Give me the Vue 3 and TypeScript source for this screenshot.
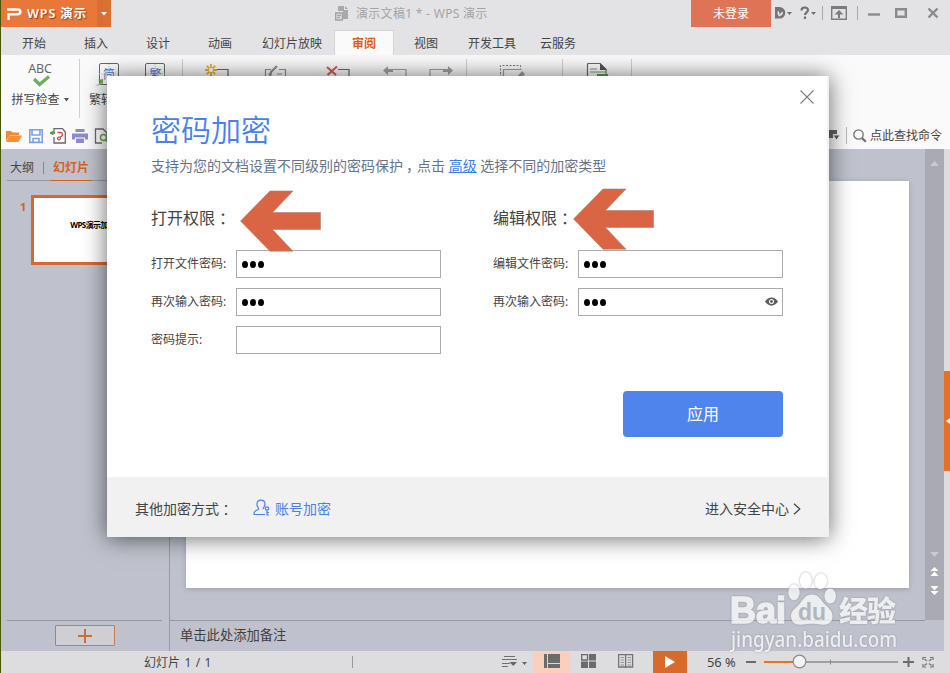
<script setup lang="ts">
import { ref } from 'vue'

interface Field {
  label: string
  dots: number
  eye?: boolean
}

interface Section {
  title: string
  fields: Field[]
}

const tabs: string[] = ['开始', '插入', '设计', '动画', '幻灯片放映', '审阅', '视图', '开发工具', '云服务']
const activeTab = ref<string>('审阅')

const sections: Section[] = [
  {
    title: '打开权限',
    fields: [
      { label: '打开文件密码:', dots: 3 },
      { label: '再次输入密码:', dots: 3 },
      { label: '密码提示:', dots: 0 },
    ],
  },
  {
    title: '编辑权限',
    fields: [
      { label: '编辑文件密码:', dots: 3 },
      { label: '再次输入密码:', dots: 3, eye: true },
    ],
  },
]
</script>

<template>
  <div class="window">
    <header class="titlebar">
      <div class="brand">
        <svg width="15" height="12" viewBox="0 0 15 12"><path d="M0 1.500h11a2.200 2.200 0 0 1 0 4.700H1.500V12" fill="none" stroke="#fff" stroke-width="2.400" /></svg>
        <span>WPS 演示</span>
      </div>
      <div class="brand-drop"><svg width="6" height="4" viewBox="0 0 6 4"><path d="M0 0h6L3 3.500z" fill="#fff" /></svg></div>
      <div class="doc-title">
        <svg width="15" height="15" viewBox="0 0 15 15">
          <path d="M3 0h6v4h4v9H8V5H3zM10 0l3 3h-3z" fill="#a9a9ab" />
          <path d="M.7 7h6.600v7H.7zM2 9.500h4M2 11.700h3" fill="#e3e3e5" stroke="#a0a0a2" stroke-width="1.300" />
        </svg>
        <span>演示文稿1 * - WPS 演示</span>
      </div>
      <div class="login">未登录</div>
      <div class="win-tools">
        <svg width="179" height="27" viewBox="0 0 179 27">
          <path d="M4 7h4.500a5.800 5.800 0 0 1 0 11.600H4z" fill="#747476" />
          <path d="M8 16.500c-2-2-1.600-4-1-6 1.500 1.500 1.800 3 1.500 5 .8-2 1.500-3.200 3.500-4 .2 2.500-1 4.500-4 5z" fill="#e3e3e5" />
          <path d="M16 12h5l-2.500 3zM40 12h5l-2.500 3z" fill="#707072" />
          <path d="M30.500 10.500c0-4 6.500-3.800 6.500-.5 0 2.300-3 2.500-3 5M34 16.500v2.500" fill="none" stroke="#707072" stroke-width="2.200" />
          <path d="M51.500 6v14M86.500 6v14" stroke="#aaaaac" />
          <path d="M60.700 6.700h14.600v12.600H60.700z" fill="none" stroke="#7c7c7e" stroke-width="1.400" />
          <path d="M60 6h16v3H60zM68 10l4.500 4.500h-3.500V18h-2v-3.500h-3.500z" fill="#7c7c7e" />
          <path d="M97 14.500h12" stroke="#8a8a8c" stroke-width="2.400" />
          <path d="M125.200 9.200h9.600v7.600h-9.600z" fill="none" stroke="#8a8a8c" stroke-width="2.400" />
          <path d="M157.500 8.500l9 9M166.500 8.500l-9 9" stroke="#8a8a8c" stroke-width="2.400" />
        </svg>
      </div>
    </header>

    <nav class="tabs">
      <span v-for="t in tabs" :key="t" class="tab" :class="{ active: t === activeTab }" @click="activeTab = t">{{ t }}</span>
    </nav>

    <section class="ribbon">
      <div class="group spell">
        <span class="abc">ABC</span>
        <svg class="check" width="19" height="12" viewBox="0 0 19 12"><path d="M2 4l5.500 5.500L17 1.500" fill="none" stroke="#70ad5c" stroke-width="3.200" /></svg>
        <span class="cmd">拼写检查<svg width="5" height="4" viewBox="0 0 5 4"><path d="M0 0h5L2.500 3.500z" fill="#555" /></svg></span>
      </div>
      <div class="group convert">
        <div class="convert-item">
          <svg width="26" height="24" viewBox="0 0 26 24">
            <rect x="5.500" y=".5" width="19" height="21" rx="1.500" fill="#fdfdfd" stroke="#68686a" />
            <path d="M5 11h19M15 1v21" stroke="#c5c5c7" stroke-dasharray="1 1" />
            <text x="9" y="15.500" class="glyph">简</text>
            <path d="M1 22c4 0 5-1 5-4l-2-1 5-1v5l-2-1c-1 2-3 3-6 2z" fill="#70ad5c" />
          </svg>
          <span class="cmd">繁转简</span>
        </div>
        <div class="convert-item">
          <svg width="22" height="24" viewBox="0 0 22 24">
            <rect x="1.500" y=".5" width="19" height="21" rx="1.500" fill="#fdfdfd" stroke="#68686a" />
            <path d="M2 11h19M11 1v21" stroke="#c5c5c7" stroke-dasharray="1 1" />
            <text x="5.500" y="15.500" class="glyph">繁</text>
          </svg>
        </div>
      </div>
      <div class="group notes-tools">
        <svg width="24" height="20" viewBox="0 0 24 20"><path d="M12 5.500h11V18H3v-5" fill="none" stroke="#68686a" stroke-width="1.200" /><path d="M6 0v4M6 8v4M0 6h4M8 6h4M1.800 1.800l2.600 2.600M10.200 1.800L7.600 4.400M1.800 10.200l2.600-2.600M10.200 10.200L7.600 7.600" stroke="#e6ad2c" stroke-width="1.800" /></svg>
        <svg width="24" height="20" viewBox="0 0 24 20"><path d="M7 5.500H1.500V18h20V5.500H15M4 10h4M13 10h5" fill="none" stroke="#8f8f91" stroke-width="1.200" /><path d="M6 12l1-4 6-6" fill="none" stroke="#8f8f91" stroke-width="2.200" /></svg>
        <svg width="24" height="20" viewBox="0 0 24 20"><path d="M12 5.500h11V18H3v-5" fill="none" stroke="#68686a" stroke-width="1.200" /><path d="M1 3l9 8M11 2.500L1.500 11" stroke="#d05a58" stroke-width="2" /></svg>
        <svg width="24" height="20" viewBox="0 0 24 20"><path d="M9 5.500h14V18H6v-4" fill="none" stroke="#a0a0a2" stroke-width="1.200" /><path d="M0 6.500L5 2v3h5v3H5v3z" fill="#a0a0a2" /></svg>
        <svg width="24" height="20" viewBox="0 0 24 20"><path d="M14 5.500H1V18h18v-4" fill="none" stroke="#a0a0a2" stroke-width="1.200" /><path d="M24 6.500L19 2v3h-5v3h5v3z" fill="#a0a0a2" /></svg>
      </div>
      <div class="group single ink">
        <svg width="26" height="20" viewBox="0 0 26 20"><path d="M1.500 18V2.500h20V6" fill="none" stroke="#7a7a7c" stroke-dasharray="2 1.500" /><path d="M4.500 18V6.500h18" fill="none" stroke="#a0a0a2" stroke-width="1.200" /><path d="M17 15l6-7 3 3-5 6z" fill="#a0a0a2" /></svg>
      </div>
      <div class="group single">
        <svg width="23" height="20" viewBox="0 0 23 20"><path d="M1.500 18V1.500q0-1 1-1H14l6 6V18" fill="#fdfdfd" stroke="#68686a" stroke-width="1.200" /><path d="M14 0l7 7h-7z" fill="#555" /><path d="M4 6h7M4 9h15" stroke="#8f8f91" /><path d="M11 11h11v3H11z" fill="#5b9d45" /></svg>
      </div>
    </section>

    <div class="quickbar">
      <div class="quick-icons">
        <svg width="16" height="16" viewBox="0 0 16 16"><path d="M0 13V3h5l1.500 1.500H13V7H4z" fill="#ef8a31" /><path d="M0 14L3.500 7.500H16L12.500 14z" fill="#fb8f35" /></svg>
        <svg width="16" height="16" viewBox="0 0 16 16"><path d="M1.800 1.800h12.400v12.600H1.800zM4 2v5h8V2M5 14v-3.500h6V14" fill="#fff" stroke="#7ba0e6" stroke-width="1.600" /></svg>
        <svg width="16" height="16" viewBox="0 0 16 16"><path d="M4 4V.7h8.500L15.300 4v11H4V9" fill="#fff" stroke="#68686a" stroke-width="1.300" /><path d="M0 5h5M2.500 3v4" stroke="#5b9d45" stroke-width="1.800" /><path d="M7.500 4.500h2.500q2.500 0 2.500 2t-2.500 2.300q-2.500.200-2.500 1.700t2 1.300q1.200-.3 1.200-3" fill="none" stroke="#cf4d50" stroke-width="1.300" /></svg>
        <svg width="16" height="16" viewBox="0 0 16 16"><path d="M3.500 1h9v3h-9zM0 5.500h16v6h-3v-2H3v2H0zM4 10.500h8V15H4z" fill="#8f8bcb" /></svg>
        <svg width="16" height="16" viewBox="0 0 16 16"><path d="M8 15H1.500V1H9l4 4v2" fill="#fff" stroke="#68686a" stroke-width="1.300" /><circle cx="9.500" cy="9.500" r="3" fill="none" stroke="#68a257" stroke-width="1.500" /><path d="M12 12l3 3" stroke="#68a257" stroke-width="2" /></svg>
      </div>
      <div class="search">
        <svg class="search-mode" width="13" height="11" viewBox="0 0 13 11"><path d="M0 0h9v4H5v4H0z" fill="#656567" /><path d="M5 5h7L8.500 10z" fill="#555" stroke="#eee" /></svg>
        <i class="vline"></i>
        <svg width="14" height="14" viewBox="0 0 14 14"><circle cx="5.500" cy="5.500" r="4.700" fill="none" stroke="#707072" stroke-width="1.300" /><path d="M9 9l3.800 3.800" stroke="#707072" stroke-width="2.200" /></svg>
        <span>点此查找命令</span>
      </div>
    </div>

    <main class="workspace">
      <aside class="side">
        <div class="side-tabs">
          <span>大纲</span><i></i><span class="on">幻灯片</span>
        </div>
        <div class="slides">
          <b>1</b>
          <div class="thumb">WPS演示加密码</div>
        </div>
        <div class="add-row">
          <button class="add"><svg width="14" height="14" viewBox="0 0 14 14"><path d="M0 7h14M7 0v14" stroke="#c8703c" stroke-width="2" /></svg></button>
        </div>
      </aside>
      <div class="editor">
        <div class="canvas"><div class="slide"></div></div>
        <div class="notes">单击此处添加备注</div>
      </div>
      <div class="scrollbar">
        <svg width="9" height="5" viewBox="0 0 9 5"><path d="M0 5h9L4.500 0z" fill="#cacacc" /></svg>
        <div class="scroll-end">
          <svg width="9" height="5" viewBox="0 0 9 5"><path d="M0 0h9L4.500 5z" fill="#cacacc" /></svg>
          <svg width="9" height="9" viewBox="0 0 9 9"><path d="M.5 4h8L4.500 0zM.5 9h8L4.500 4.500z" fill="#fff" /></svg>
          <svg width="9" height="9" viewBox="0 0 9 9"><path d="M.5 0h8L4.500 4.500zM.5 5h8L4.500 9z" fill="#fff" /></svg>
        </div>
      </div>
      <div class="task-strip">
        <div class="handle"><svg width="4" height="6" viewBox="0 0 4 6"><path d="M4 0v6L0 3z" fill="#fff" /></svg></div>
      </div>
    </main>

    <footer class="status">
      <div class="page-count">幻灯片 1 / 1</div>
      <div class="status-mid"></div>
      <div class="note-toggle">
        <svg width="26" height="13" viewBox="0 0 26 13"><path d="M3 .5h11M1 3.500h15M1 7.500h8M1 10.500h6" stroke="#707072" stroke-width="1.200" /><path d="M8.500 6h7.500L12.200 10zM21 6h5l-2.500 3z" fill="#666" /></svg>
      </div>
      <div class="view on"><svg width="16" height="14" viewBox="0 0 16 14"><path d="M0 0h3v14H0zM4 0h12v9H4zM4 10h12v4H4z" fill="#6b6b6d" /></svg></div>
      <div class="view"><svg width="16" height="14" viewBox="0 0 16 14"><path d="M.7.700h5.800v5.300H.7z" fill="none" stroke="#6b6b6d" stroke-width="1.300" /><path d="M8 0h7v6.500H8zM0 7.500h7V14H0zM8 7.500h7V14H8z" fill="#6b6b6d" /></svg></div>
      <div class="view"><svg width="16" height="14" viewBox="0 0 16 14"><path d="M.6.600h14v12.400H.6zM7.600.600V14" fill="none" stroke="#747476" stroke-width="1.300" /><path d="M2.500 3.500h3.500M2.500 6h3.500M2.500 8.500h3.500M9.500 3.500H13M9.500 6H13M9.500 8.500H13M2.500 11h3.500M9.500 11H13" stroke="#939395" /></svg></div>
      <div class="play"><svg width="10" height="12" viewBox="0 0 10 12"><path d="M0 0l10 6-10 6z" fill="#fff" /></svg></div>
      <div class="zoom-value">56 %</div>
      <svg class="zoombar" width="190" height="20" viewBox="0 0 190 20">
        <path d="M2 10h10" stroke="#6b6b6d" stroke-width="2" />
        <path d="M20 10h36" stroke="#ec7125" stroke-width="2" />
        <path d="M56 10h98" stroke="#8b8b8f" stroke-width="1.600" />
        <path d="M86.500 7.500v5" stroke="#8b8b8f" />
        <circle cx="55.500" cy="9.500" r="6.300" fill="#f3f3f3" stroke="#8b8b8f" stroke-width="1.200" />
        <path d="M159 10h11M164.500 5v10" stroke="#6b6b6d" stroke-width="2" />
        <path d="M179 8V5.500h3M186 5.500h3V8M189 12v3h-3M182 15h-3v-3M180.500 7l2.500 2M187.500 7L185 9M187.500 13.500l-2.500-2M180.500 13.500l2.500-2" fill="none" stroke="#747476" stroke-width="1.200" />
      </svg>
    </footer>

    <div class="shade">
      <div class="dialog">
        <div class="dialog-body">
          <div class="dialog-top">
            <svg width="14" height="14" viewBox="0 0 14 14"><path d="M.5.500l13 13M13.500.500l-13 13" stroke="#7c7c7c" stroke-width="1.100" /></svg>
          </div>
          <h1>密码加密</h1>
          <p>支持为您的文档设置不同级别的密码保护<span class="comma">，</span>点击 <a>高级</a> 选择不同的加密类型</p>
          <div class="forms">
            <section v-for="s in sections" :key="s.title">
              <h2>{{ s.title }}<span class="mid">：</span></h2>
              <div v-for="f in s.fields" :key="f.label" class="field">
                <label>{{ f.label }}</label>
                <div class="input">
                  <i v-for="n in f.dots" :key="n" class="dot"></i>
                  <svg v-if="f.eye" class="eye" width="13" height="9" viewBox="0 0 13 9"><path d="M0 4.500C3.500-1 9.500-1 13 4.500 9.500 10 3.500 10 0 4.500z" fill="#5c5c5c" /><circle cx="6.500" cy="4.500" r="2.500" fill="#fff" /><circle cx="6.500" cy="4.500" r="1.400" fill="#5c5c5c" /></svg>
                </div>
              </div>
            </section>
          </div>
          <button class="apply">应用</button>
        </div>
        <div class="dialog-foot">
          <span>其他加密方式<span class="mid">：</span></span>
          <a class="account">
            <svg width="18" height="18" viewBox="0 0 18 18"><path d="M12 15.500H1c-.5-3.200 1.500-4.200 4.500-5C6.500 9.500 3.500 8 4 4.500 4.500 0 11.500 0 12 4.500c.2 2-1 3.500-2 5.500" fill="none" stroke="#4a80ea" stroke-width="1.200" /><circle cx="14" cy="9.500" r="1.700" fill="none" stroke="#4a80ea" stroke-width="1.200" /><path d="M14 11.500V16h2M14 13.500h2" fill="none" stroke="#4a80ea" stroke-width="1.200" /></svg>
            <span>账号加密</span>
          </a>
          <span class="safe">进入安全中心<svg width="8" height="12" viewBox="0 0 8 12"><path d="M1 .8L6.800 6 1 11.200" fill="none" stroke="#444" stroke-width="1.200" /></svg></span>
        </div>
      </div>
    </div>

    <svg class="arrow first" width="82" height="62" viewBox="0 0 82 62"><path d="M.5 31L30 1H53L32.500 22.500H80.500V39.500H32.500L53 61.200H30z" fill="#d96544" stroke="#ad8173" stroke-width=".6" /></svg>
    <svg class="arrow second" width="82" height="62" viewBox="0 0 82 62"><path d="M.5 31L30 1H53L32.500 22.500H80.500V39.500H32.500L53 61.200H30z" fill="#d96544" stroke="#ad8173" stroke-width=".6" /></svg>

    <svg class="watermark" width="180" height="90" viewBox="0 0 180 90">
      <g class="wm-fill">
        <ellipse cx="66" cy="27.300" rx="5.700" ry="8" />
        <ellipse cx="77.800" cy="15.500" rx="6" ry="8.300" />
        <ellipse cx="92.800" cy="16.300" rx="6.300" ry="8" transform="rotate(8 92.800 16.300)" />
        <ellipse cx="102.200" cy="31" rx="5.800" ry="7.600" />
        <path d="M84 29.500c6 0 8 4 12 9 4 4 8.500 7 8.500 12.500 0 7-5 9.500-11 8.500-7-1-12-1-19 0-7 1-11.500-2-11.500-8.500 0-6 5.500-8 9-12.500 3.500-5 6-9 12-9z" />
        <text x="2" y="58" class="bai" textLength="56" lengthAdjust="spacingAndGlyphs">Bai</text>
        <text x="111" y="56.500" class="jy" textLength="57">经验</text>
        <text x="3" y="81.500" class="url" textLength="166" lengthAdjust="spacingAndGlyphs">jingyan.baidu.com</text>
      </g>
      <text x="70" y="55" class="du" textLength="28" lengthAdjust="spacingAndGlyphs">du</text>
    </svg>
  </div>
</template>

<style>
body {
  overflow: hidden;
}
</style>

<style scoped>
* {
  box-sizing: border-box;
}
svg {
  display: block;
  flex: none;
}
.window {
  position: relative;
  display: flex;
  flex-direction: column;
  width: 950px;
  height: 673px;
  overflow: hidden;
  border-left: 1px solid #465800;
  background: #e3e3e5;
  color: #444;
  font: 12px/16px 'Noto Sans', 'Noto Sans CJK SC', sans-serif;
}
.titlebar {
  display: flex;
  height: 27px;
}
.brand {
  display: flex;
  align-items: center;
  gap: 5px;
  width: 96px;
  padding-left: 6px;
  background: #e77839;
  color: #fff;
  font-weight: 600;
  font-size: 12.500px;
  letter-spacing: 0.9px;
  white-space: nowrap;
  text-shadow: 1px 1px 1px #8e4218;
}
.brand-drop {
  display: flex;
  align-items: center;
  justify-content: center;
  width: 14px;
  background: #db6e31;
}
.doc-title {
  display: flex;
  align-items: center;
  gap: 6px;
  width: 580px;
  padding-left: 224px;
  color: #a3a3a5;
  letter-spacing: 0.3px;
  white-space: nowrap;
}
.login {
  width: 80px;
  line-height: 27px;
  background: #df7355;
  color: #fff;
  text-align: center;
}
.tabs {
  display: flex;
  height: 28px;
  padding: 3px 0 0 2px;
}
.tab {
  min-width: 62px;
  padding: 0 11px;
  line-height: 28px;
  height: 25px;
  text-align: center;
  white-space: nowrap;
}
.tab.active {
  width: 60px;
  min-width: 60px;
  margin: 0 1px;
  border: 1px solid #d3d3d6;
  border-bottom: 0;
  background: #fafafa;
  color: #d9601d;
  font-weight: 600;
  line-height: 26px;
}
.ribbon {
  display: flex;
  height: 63px;
  padding-top: 4px;
  background: #fafafa;
}
.group {
  height: 59px;
  border-right: 1px solid #cfcfd2;
}
.spell {
  display: flex;
  flex-direction: column;
  align-items: center;
  width: 79px;
  padding-top: 2px;
}
.abc {
  font-size: 12.500px;
  color: #68686a;
  letter-spacing: -0.2px;
}
.check {
  margin-top: -2px;
  margin-left: 3px;
  margin-bottom: 5px;
}
.cmd {
  display: flex;
  align-items: center;
  gap: 4px;
  white-space: nowrap;
}
.convert {
  display: flex;
  width: 103px;
  padding: 4px 0 0 9px;
  gap: 19px;
}
.convert-item {
  display: flex;
  flex-direction: column;
  align-items: center;
  gap: 5px;
}
.glyph {
  font-size: 12px;
  fill: #4179d8;
}
.notes-tools {
  display: grid;
  grid-template-columns: 68px 50px 74px 40px 51px;
  justify-items: center;
  width: 284px;
  padding-top: 5px;
}
.single {
  display: flex;
  justify-content: center;
  width: 69px;
  padding-top: 4px;
}
.ink {
  width: 96px;
  padding-right: 6px;
}
.quickbar {
  display: flex;
  justify-content: space-between;
  height: 31px;
  padding: 0 8px 0 5px;
  background: #fafafa;
}
.quick-icons {
  display: flex;
  gap: 6px;
  padding-top: 10px;
}
.search {
  display: flex;
  align-items: center;
  padding-bottom: 2px;
  padding-top: 6px;
  white-space: nowrap;
}
.search span {
  margin-left: 3px;
}
.vline {
  width: 1px;
  height: 17px;
  margin: 0 6px 0 5px;
  background: #bbb;
}
.workspace {
  display: flex;
  height: 502px;
  background: #bfc2cc;
}
.side {
  display: flex;
  flex-direction: column;
  width: 169px;
  border-right: 1px solid #989aa3;
}
.side-tabs {
  display: flex;
  align-items: center;
  height: 32px;
  margin: 0 7px 0 6px;
  padding: 6px 0 0 3px;
  border-bottom: 1px solid #9598a2;
}
.side-tabs i {
  width: 1px;
  height: 12px;
  margin: 0 6px 0 9px;
  background: #85878f;
}
.side-tabs .on {
  height: 26px;
  padding: 0 3px;
  margin-bottom: -1px;
  border-bottom: 1px solid #d9601d;
  color: #d9601d;
  font-weight: 600;
  line-height: 25px;
}
.slides {
  display: flex;
  flex: 1;
  gap: 5px;
  padding: 14px 0 0 19px;
}
.slides b {
  width: 6px;
  padding-top: 4px;
  color: #d9601d;
  font-size: 11px;
}
.thumb {
  width: 127px;
  height: 70px;
  border: 3px solid #d8692e;
  background: #fff;
  color: #000;
  font: 700 8px/54px 'Noto Sans', 'Noto Sans CJK SC', sans-serif;
  letter-spacing: -0.6px;
  text-align: center;
  padding-left: 4px;
}
.add-row {
  display: flex;
  justify-content: center;
  height: 31px;
  margin: 0 7px 0 6px;
  padding: 4px 0 5px;
  border-top: 1px solid #9598a2;
}
.add {
  display: flex;
  align-items: center;
  justify-content: center;
  width: 60px;
  padding: 0;
  border: 1px solid #c77a50;
  border-radius: 1px;
  background: #cfcfd3;
}
.editor {
  display: flex;
  flex-direction: column;
  width: 755px;
}
.canvas {
  height: 471px;
  padding: 32px 16px;
}
.slide {
  height: 407px;
  background: #fff;
  box-shadow: 0 1px 5px #999ba6;
}
.notes {
  flex: 1;
  padding-left: 10px;
  border-top: 1px solid #989aa3;
  color: #404040;
  font-size: 13.300px;
  line-height: 29px;
}
.scrollbar {
  display: flex;
  flex-direction: column;
  align-items: center;
  justify-content: space-between;
  width: 19px;
  height: 471px;
  padding: 12px 0 25px;
  background: #a9aab3;
}
.scroll-end {
  display: flex;
  flex-direction: column;
  gap: 10px;
}
.task-strip {
  width: 6px;
  padding-top: 222px;
  background: #dddddf;
}
.handle {
  display: flex;
  align-items: center;
  justify-content: flex-end;
  height: 100px;
  background: #e96f24;
}
.status {
  display: flex;
  align-items: center;
  height: 22px;
  background: #dddddf;
}
.page-count {
  width: 351px;
  padding: 1px 0 0 143px;
  font-size: 12px;
  word-spacing: 1.3px;
  white-space: pre;
}
.status-mid {
  width: 149px;
  height: 12px;
  border-left: 1px solid #999;
}
.note-toggle {
  width: 32px;
}
.view {
  display: flex;
  align-items: center;
  justify-content: center;
  width: 37px;
  height: 22px;
  padding-bottom: 2px;
}
.view.on {
  background: #fbcfbb;
}
.play {
  display: flex;
  align-items: center;
  justify-content: center;
  width: 34px;
  height: 22px;
  margin-left: 9px;
  background: #d86b2b;
}
.zoom-value {
  width: 57px;
  padding-left: 20px;
  font-size: 12.900px;
  white-space: nowrap;
}
.shade {
  position: absolute;
  top: 55px;
  left: 79px;
  width: 780px;
  height: 520px;
  padding: 21px 0 0 27px;
  overflow: hidden;
}
.dialog {
  width: 722px;
  height: 461px;
  background: #f1f1f1;
  box-shadow: 0 1px 22px rgba(0, 0, 0, 0.6);
}
.dialog-body {
  height: 401px;
  padding: 14px 46px 0 44px;
  border-right: 2px solid #f3f3f3;
  background: #fff;
}
.dialog-top {
  display: flex;
  justify-content: flex-end;
  margin-right: -33px;
}
h1 {
  margin: 5px 0 0;
  color: #4a80ea;
  font-size: 30px;
  font-weight: 350;
  line-height: 42px;
}
p {
  margin: 5px 0 0;
  color: #687289;
  font-size: 14px;
  line-height: 20px;
  white-space: nowrap;
}
a {
  color: #3b7ce0;
}
p a {
  text-decoration: underline;
}
.comma {
  display: inline-block;
  width: 14px;
  text-indent: 3px;
}
.mid {
  font-family: 'Noto Sans CJK TC', sans-serif;
  line-height: 1;
  vertical-align: -1px;
}
.forms {
  display: grid;
  grid-template-columns: 342px 290px;
  height: 215px;
  padding-top: 33px;
}
h2 {
  margin: 0 0 21px;
  height: 20px;
  font-size: 16px;
  font-weight: 400;
  line-height: 19px;
}
.field {
  display: flex;
  height: 28px;
  margin-bottom: 10px;
}
label {
  width: 85px;
  line-height: 27px;
}
.input {
  display: flex;
  align-items: center;
  gap: 2px;
  width: 205px;
  padding: 1px 4px 0 5px;
  border: 1px solid #ababab;
  background: #fff;
}
.dot {
  width: 6px;
  height: 7px;
  border-radius: 50%;
  background: #000;
}
.eye {
  margin: 0 0 2px auto;
}
.apply {
  display: block;
  width: 160px;
  height: 46px;
  padding: 0;
  margin-left: auto;
  margin-right: -2px;
  border: 0;
  border-radius: 4px;
  background: #5084ed;
  color: #fff;
  font: 16px/42px 'Noto Sans', 'Noto Sans CJK SC', sans-serif;
}
.dialog-foot {
  display: flex;
  align-items: center;
  height: 60px;
  padding: 3px 28px 0 28px;
  font-size: 14px;
}
.account {
  display: flex;
  align-items: center;
  gap: 4px;
  margin-left: 20px;
  color: #4a80ea;
}
.account svg {
  margin-bottom: 1px;
}
.safe {
  display: flex;
  align-items: center;
  gap: 4px;
  margin-left: auto;
}
.arrow {
  position: absolute;
}
.first {
  top: 190px;
  left: 239px;
}
.second {
  top: 188px;
  left: 572px;
}
.watermark {
  position: absolute;
  top: 565px;
  left: 727px;
  overflow: visible;
}
.wm-fill {
  fill: #fff;
  opacity: 0.72;
  filter: drop-shadow(0 0 1px #85858f);
}
.bai {
  font: 700 36px 'Liberation Sans', sans-serif;
  stroke: #fff;
  stroke-width: 1.6px;
}
.jy {
  font: 900 29px 'Noto Sans CJK SC', sans-serif;
}
.url {
  font: 500 21px 'Noto Sans', sans-serif;
}
.du {
  fill: #b3b5bf;
  font: 700 24px 'Liberation Sans', sans-serif;
}
</style>
